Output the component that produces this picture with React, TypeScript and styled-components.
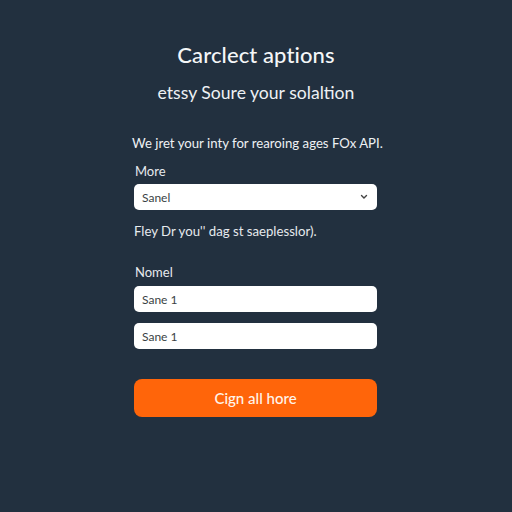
import React from "react";
import styled, { createGlobalStyle } from "styled-components";

const GlobalStyle = createGlobalStyle`
  html, body {
    margin: 0;
    padding: 0;
    background: #22303f;
  }
  body {
    font-family: "Lato", "Open Sans", "Liberation Sans", sans-serif;
  }
`;

const Page = styled.div`
  width: 512px;
  height: 512px;
  background: #22303f;
  display: flex;
  flex-direction: column;
  align-items: center;
  box-sizing: border-box;
  padding-top: 41px;
`;

const Title = styled.h1`
  margin: 0;
  font-size: 22px;
  font-weight: 500;
  color: #f4f6f8;
  letter-spacing: 0.1px;
`;

const Subtitle = styled.h2`
  margin: 14px 0 0;
  font-size: 17.6px;
  font-weight: 400;
  color: #eef1f4;
`;

const Form = styled.form`
  width: 243px;
  margin-top: 32px;
  margin-left: -1px;
  display: flex;
  flex-direction: column;
`;

const Intro = styled.p`
  margin: 0 0 0 -2px;
  font-size: 13.2px;
  color: #eef1f4;
  white-space: nowrap;
`;

const Label = styled.label<{ $top: number }>`
  margin-top: ${(p) => p.$top}px;
  padding-left: 1px;
  font-size: 13px;
  color: #e6eaee;
`;

const Field = styled.div<{ $top: number }>`
  margin-top: ${(p) => p.$top}px;
  height: 26px;
  background: #ffffff;
  border-radius: 5px;
  display: flex;
  align-items: center;
  justify-content: space-between;
  padding: 0 9px 0 8px;
  box-sizing: border-box;
  font-size: 12px;
  color: #3a3f45;
`;

const Hint = styled.p`
  margin: 13px 0 0;
  font-size: 13.2px;
  color: #e6eaee;
`;

const Button = styled.button`
  margin-top: 30px;
  height: 38px;
  border: none;
  border-radius: 8px;
  background: #ff650a;
  color: #fff4ea;
  font-family: inherit;
  font-size: 15px;
  font-weight: 500;
  cursor: pointer;
`;

const Chevron = () => (
  <svg width="8" height="6" viewBox="0 0 8 6" fill="none">
    <path d="M1.5 1.5 L4 4 L6.5 1.5" stroke="#444" strokeWidth="1.4" strokeLinecap="round" />
  </svg>
);

export default function App() {
  return (
    <>
      <GlobalStyle />
      <Page>
        <Title>Carclect aptions</Title>
        <Subtitle>etssy Soure your solaltion</Subtitle>
        <Form onSubmit={(e) => e.preventDefault()}>
          <Intro>We jret your inty for rearoing ages FOx API.</Intro>
          <Label $top={12}>More</Label>
          <Field $top={5}>
            <span>Sanel</span>
            <Chevron />
          </Field>
          <Hint>Fley Dr you'' dag st saeplesslor).</Hint>
          <Label $top={25}>Nomel</Label>
          <Field $top={6}>
            <span>Sane 1</span>
          </Field>
          <Field $top={11}>
            <span>Sane 1</span>
          </Field>
          <Button type="submit">Cign all hore</Button>
        </Form>
      </Page>
    </>
  );
}
